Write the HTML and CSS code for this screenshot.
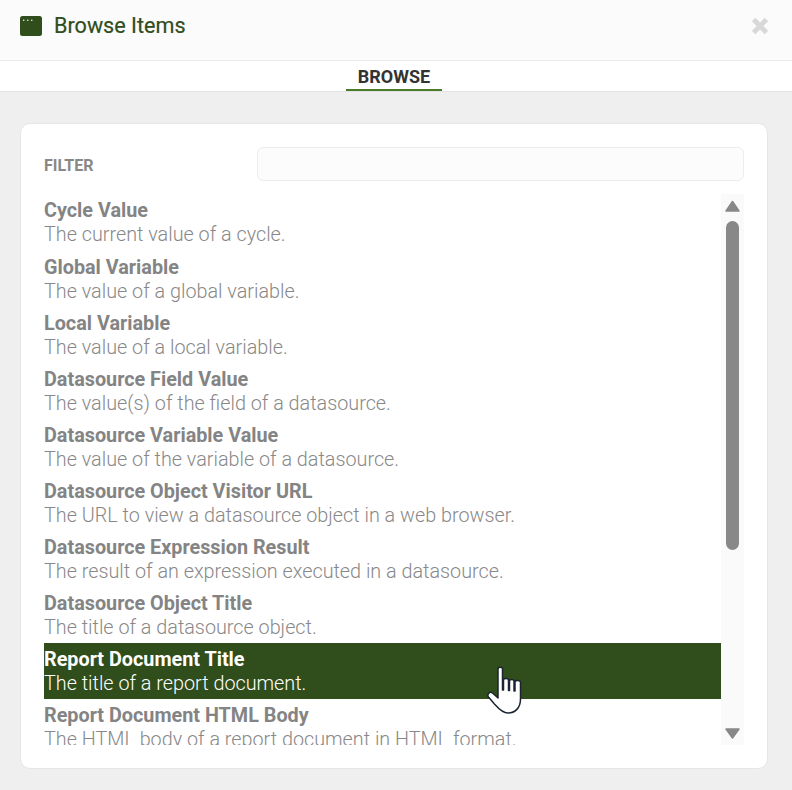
FILE: index.html
```html
<!DOCTYPE html>
<html lang="en">
<head>
<meta charset="utf-8">
<title>Browse Items</title>
<link rel="stylesheet" href="styles.css">
</head>
<body>
<header class="header">
  <div class="heading">
    <svg class="window-icon" viewBox="0 0 22 20" aria-hidden="true">
      <rect x="0" y="0" width="22" height="20" rx="2.5" fill="#304d1c"/>
      <rect x="3" y="3.6" width="1.4" height="1.4" fill="#fff" opacity=".8"/>
      <rect x="7" y="3.6" width="1.4" height="1.4" fill="#fff" opacity=".8"/>
      <rect x="11" y="3.6" width="1.4" height="1.4" fill="#fff" opacity=".8"/>
    </svg>
    <h1 class="title">Browse Items</h1>
  </div>
  <svg class="close" viewBox="0 0 18 18" aria-hidden="true">
    <path d="M2.600 2.600 15.400 15.400M15.400 2.600 2.600 15.400" stroke="#d8d8d8" stroke-width="5" fill="none"/>
  </svg>
</header>
<nav class="tabs"><span class="tab">BROWSE</span></nav>
<main class="content">
  <section class="card">
    <div class="filter">
      <label class="filter-label" for="filter">FILTER</label>
      <input class="filter-input" id="filter" type="text">
    </div>
    <div class="list-wrap">
      <ul class="list">
        <li class="item first"><b>Cycle Value</b><span>The current value of a cycle.</span></li>
        <li class="item"><b>Global Variable</b><span>The value of a global variable.</span></li>
        <li class="item"><b>Local Variable</b><span>The value of a local variable.</span></li>
        <li class="item"><b>Datasource Field Value</b><span>The value(s) of the field of a datasource.</span></li>
        <li class="item"><b>Datasource Variable Value</b><span>The value of the variable of a datasource.</span></li>
        <li class="item"><b>Datasource Object Visitor URL</b><span>The URL to view a datasource object in a web browser.</span></li>
        <li class="item"><b>Datasource Expression Result</b><span>The result of an expression executed in a datasource.</span></li>
        <li class="item"><b>Datasource Object Title</b><span>The title of a datasource object.</span></li>
        <li class="item active"><b>Report Document Title</b><span>The title of a report document.</span></li>
        <li class="item"><b>Report Document HTML Body</b><span>The HTML body of a report document in HTML format.</span></li>
      </ul>
      <div class="scrollbar">
        <svg class="arrow" viewBox="0 0 15 12" aria-hidden="true"><path d="M7.500 1.500 14 11H1Z" fill="#888" stroke="#888" stroke-width="1.500" stroke-linejoin="round"/></svg>
        <div class="thumb"></div>
        <svg class="arrow arrow-down" viewBox="0 0 15 11" aria-hidden="true"><path d="M1 1H14L7.500 10Z" fill="#888" stroke="#888" stroke-width="1.500" stroke-linejoin="round"/></svg>
      </div>
      <svg class="cursor" viewBox="0 0 36 50" aria-hidden="true">
        <path d="M11 3C11 .8 15.500 .8 15.500 3V24H16.500V14C16.500 12 21.500 12 21.500 14V24.500H22.500V15C22.500 13 27 13 27 15V25H28V16C28 14 33 14 33.500 16V33C33.500 42 28 47 21 47C14 47 10.500 41 7 37.500L1.500 31C-.5 28 3 25 5.500 27L11 32Z" fill="#fff" stroke="#1b2430" stroke-width="1.500" stroke-linejoin="round"/>
      </svg>
    </div>
  </section>
</main>
</body>
</html>
```
FILE: styles.css
```css
* { box-sizing: border-box; }
html, body { margin: 0; height: 790px; overflow: hidden; }
body {
  font-family: Roboto, "Liberation Sans", sans-serif;
  background: #efefef;
  display: flex;
  flex-direction: column;
}
.header {
  height: 61px;
  background: #fbfbfb;
  border-bottom: 1px solid #ececec;
  display: flex;
  align-items: center;
  justify-content: space-between;
  padding: 0 23px 8px 20px;
}
.heading { display: flex; align-items: center; gap: 12px; }
.window-icon { width: 22px; height: 20px; display: block; }
.title { margin: 0; font-size: 21.6px; font-weight: 400; color: #304d1c; line-height: 24px; -webkit-text-stroke: .2px #304d1c; }
.close { width: 18px; height: 18px; display: block; }
.tabs {
  height: 31px;
  background: #fff;
  border-bottom: 1px solid #e2e2e2;
  display: flex;
  justify-content: center;
}
.tab {
  width: 96px;
  height: 30px;
  text-align: center;
  font-size: 18px;
  font-weight: 700;
  line-height: 31px;
  color: #333;
  border-bottom: 2px solid #4a7a2c;
  margin-left: -4px;
}
.content { flex: 1; padding: 31px 24px 21px 20px; min-height: 0; }
.card {
  height: 646px;
  background: #fff;
  border: 1px solid #e6e6e6;
  border-radius: 10px;
  padding: 23px 23px 23px 23px;
  display: flex;
  flex-direction: column;
}
.filter { display: flex; align-items: center; height: 34px; flex: none; }
.filter-label { width: 213px; padding-top: 2px; font-size: 16px; font-weight: 700; color: #888; }
.filter-input {
  flex: 1;
  height: 34px;
  border: 1px solid #ededed;
  border-radius: 6px;
  background: #fcfcfc;
  outline: none;
}
.list-wrap { position: relative; flex: 1; min-height: 0; margin-top: 13px; display: flex; overflow: hidden; }
.list { list-style: none; margin: 0; padding: 1px 0 0; flex: 1; min-width: 0; overflow: hidden; }
.item { height: 56px; color: #888; font-size: 19.8px; line-height: 24px; padding-top: 5px; }
.item.first { padding-top: 4px; }
.item b { display: block; font-weight: 700; color: #848484; }
.item span { display: block; font-weight: 300; }
.item.active { background: #304d1c; color: #fff; }
.item.active b { color: #fff; }
.scrollbar {
  width: 23px;
  flex: none;
  background: #fafafa;
  display: flex;
  flex-direction: column;
  align-items: center;
  padding-top: 6px;
  padding-bottom: 6px;
}
.arrow { width: 15px; height: 12px; display: block; flex: none; }
.thumb { width: 13px; height: 329px; margin-top: 9px; border-radius: 7px; background: #888; }
.arrow-down { margin-top: auto; height: 11px; }
.cursor { position: absolute; left: 443px; top: 472px; width: 36px; height: 50px; }
```
